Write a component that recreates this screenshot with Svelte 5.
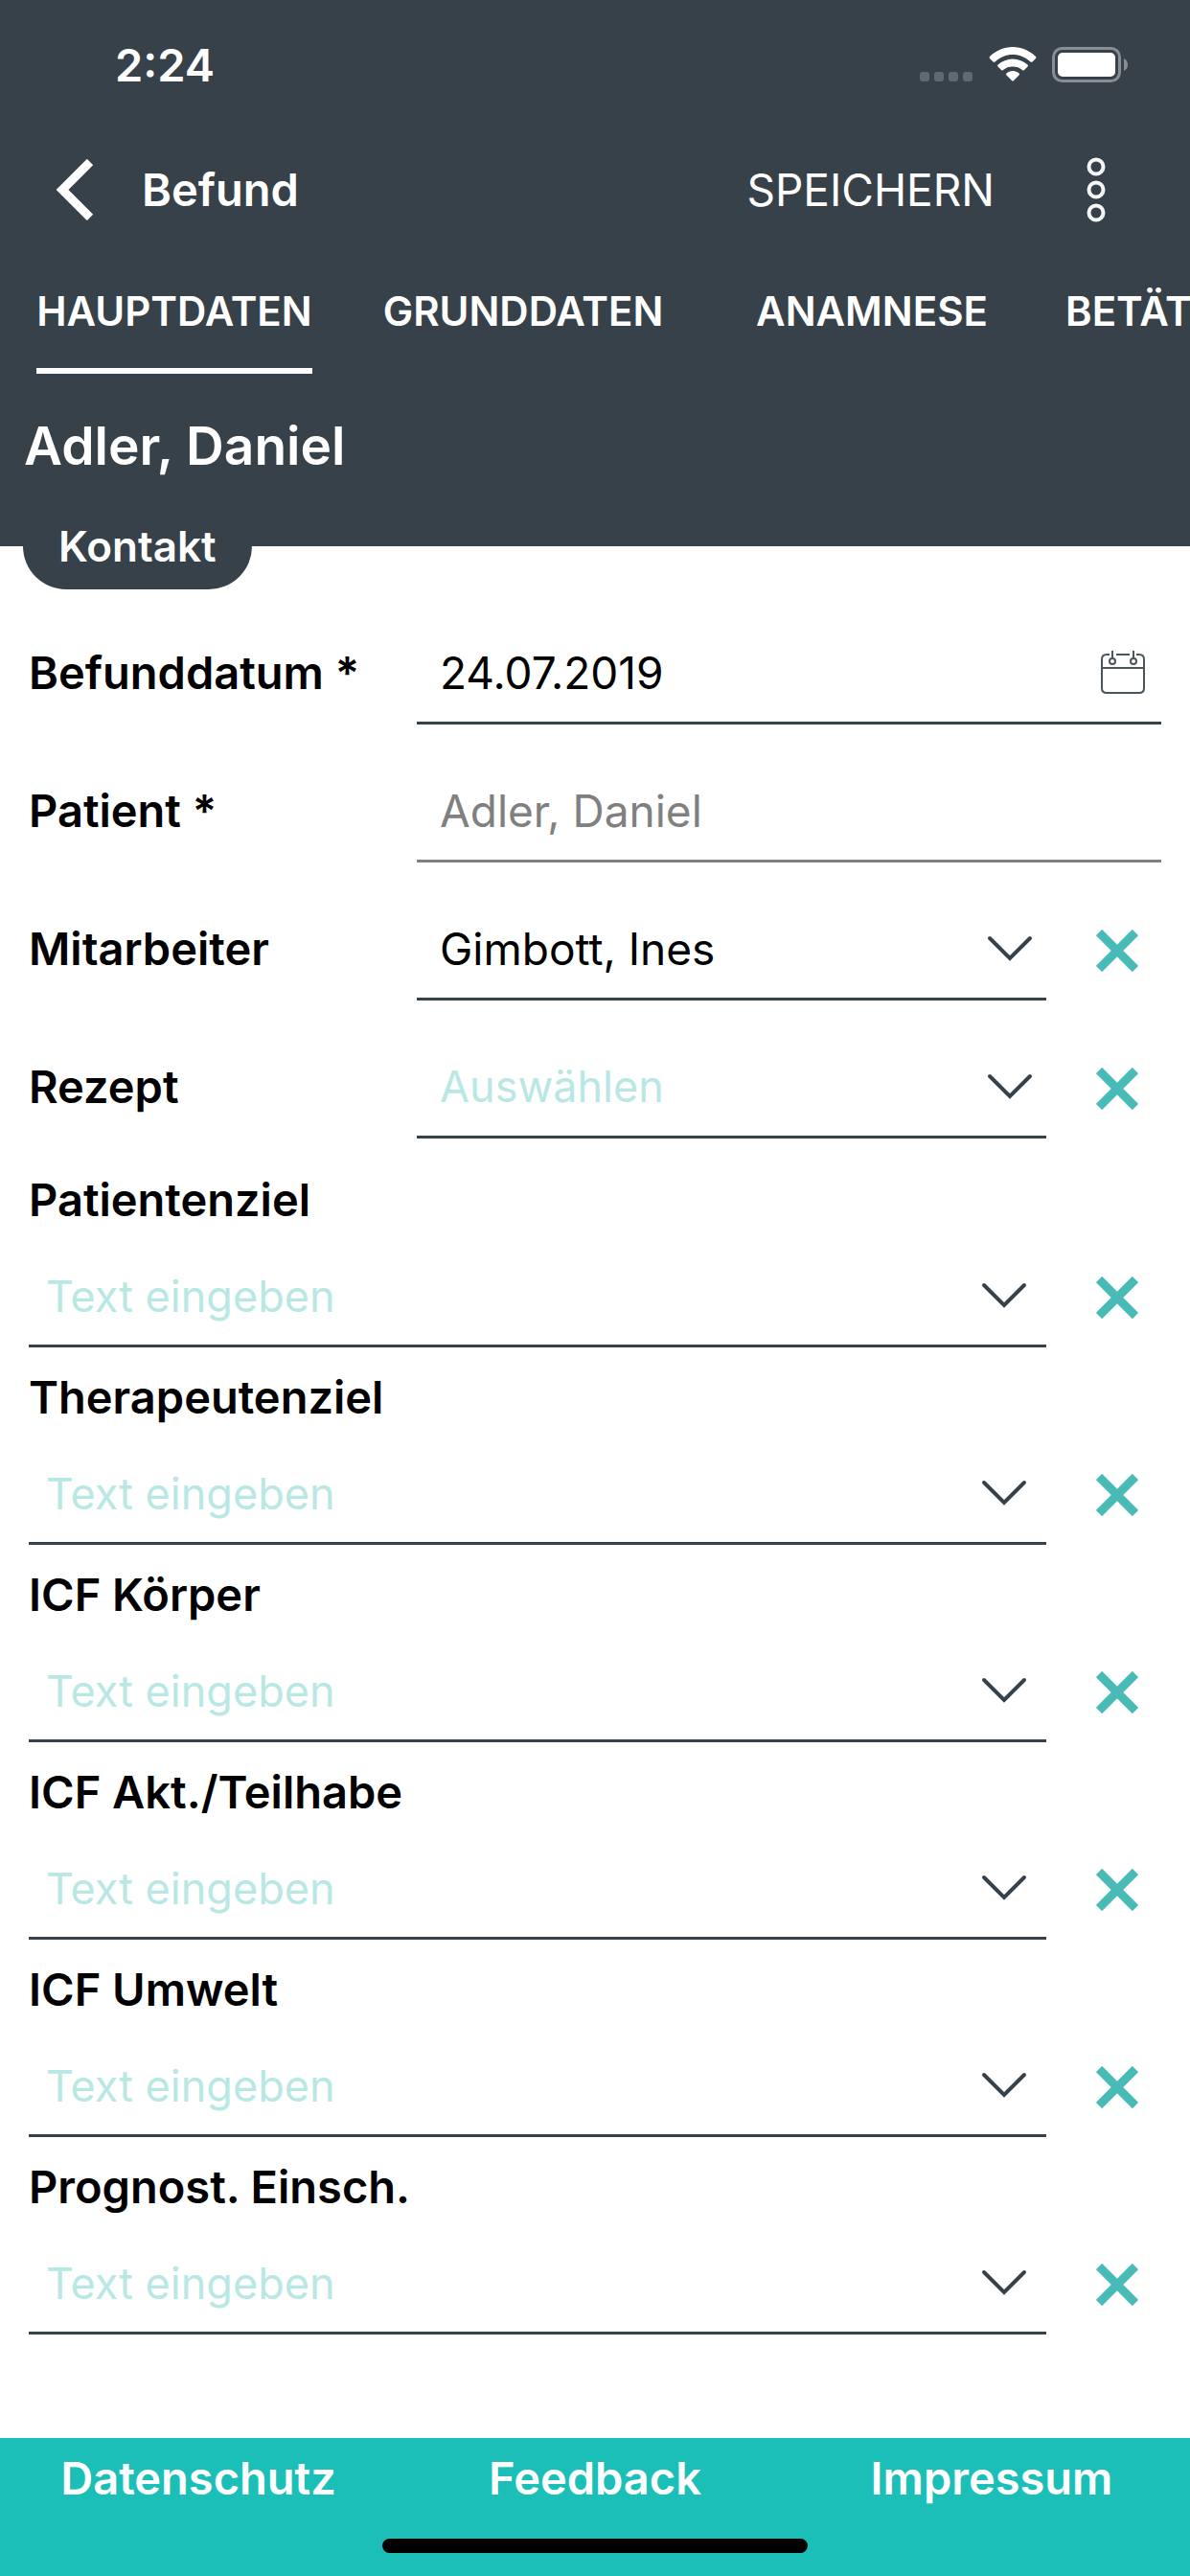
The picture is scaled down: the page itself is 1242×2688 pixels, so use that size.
<script lang="ts">
  interface TextField {
    id: string;
    label: string;
    value: string;
  }

  const tabs = ['HAUPTDATEN', 'GRUNDDATEN', 'ANAMNESE', 'BETÄTIGUNGSPROFIL'];
  let activeTab = $state('HAUPTDATEN');

  let befunddatum = $state('24.07.2019');
  let mitarbeiter = $state('Gimbott, Ines');
  let rezept = $state('');

  let textFields: TextField[] = $state([
    { id: 'patientenziel', label: 'Patientenziel', value: '' },
    { id: 'therapeutenziel', label: 'Therapeutenziel', value: '' },
    { id: 'icf-koerper', label: 'ICF Körper', value: '' },
    { id: 'icf-teilhabe', label: 'ICF Akt./Teilhabe', value: '' },
    { id: 'icf-umwelt', label: 'ICF Umwelt', value: '' },
    { id: 'prognose', label: 'Prognost. Einsch.', value: '' }
  ]);
</script>

{#snippet chevron()}
  <svg class="chevron" width="48" height="28" viewBox="0 0 48 28" aria-hidden="true">
    <path d="M3 3 L24 24 L45 3" fill="none" stroke="#37414a" stroke-width="4" stroke-linecap="round" />
  </svg>
{/snippet}

{#snippet clearButton(label: string, clear: () => void)}
  <button type="button" class="clear" aria-label="{label} löschen" onclick={clear}>
    <svg width="44" height="44" viewBox="0 0 44 44" aria-hidden="true">
      <path d="M3 3 L41 41 M41 3 L3 41" stroke="#48bbb6" stroke-width="9" />
    </svg>
  </button>
{/snippet}

<div class="app">
  <header>
    <div class="status-bar">
      <span class="time">2:24</span>
      <div class="status-icons">
        <svg width="56" height="38" viewBox="0 0 56 38" aria-hidden="true">
          <g fill="#616971">
            <rect x="0" y="26" width="10" height="10" rx="3" />
            <rect x="15" y="26" width="10" height="10" rx="3" />
            <rect x="30" y="26" width="10" height="10" rx="3" />
            <rect x="45" y="26" width="10" height="10" rx="3" />
          </g>
        </svg>
        <svg width="50" height="38" viewBox="0 0 50 38" aria-hidden="true">
          <path d="M25 0 C34 0 43 4 49 10 Q50 11 49 12 L45.500 15.500 Q44.500 16 43.500 15.500 C38 10.500 32 8 25 8 C18 8 12 10.500 6.500 15.500 Q5.500 16 4.500 15.500 L1 12 Q0 11 1 10 C7 4 16 0 25 0 Z" fill="#fff" />
          <path d="M25 12.500 C31 12.500 36 15 40.500 18.500 Q41.500 19.500 40.500 20.500 L37 24 Q36 25 35 24 C32 21.500 29 20.500 25 20.500 C21 20.500 18 21.500 15 24 Q14 25 13 24 L9.500 20.500 Q8.500 19.500 9.500 18.500 C14 15 19 12.500 25 12.500 Z" fill="#fff" />
          <path d="M25 25 C27.500 25 30 26 31.500 27.500 Q32.500 28.500 31.500 29.500 L26 35 Q25 36 24 35 L18.500 29.500 Q17.500 28.500 18.500 27.500 C20 26 22.500 25 25 25 Z" fill="#fff" />
        </svg>
        <svg width="80" height="38" viewBox="0 0 80 38" aria-hidden="true">
          <rect x="1.500" y="1.500" width="69" height="34" rx="9" fill="none" stroke="#888e93" stroke-width="3" />
          <rect x="6" y="6" width="60" height="25" rx="5" fill="#fff" />
          <path d="M75 12 Q79 14 79 18.500 Q79 23 75 25 Z" fill="#888e93" />
        </svg>
      </div>
    </div>

    <div class="toolbar">
      <button type="button" class="icon-button" aria-label="Zurück">
        <svg width="40" height="64" viewBox="0 0 40 64" aria-hidden="true">
          <path d="M36 3 L7 32 L36 61" fill="none" stroke="#fff" stroke-width="9" />
        </svg>
      </button>
      <h1>Befund</h1>
      <button type="button" class="save">SPEICHERN</button>
      <button type="button" class="icon-button" aria-label="Menü">
        <svg width="20" height="68" viewBox="0 0 20 68" aria-hidden="true">
          <g fill="none" stroke="#f4f5f5" stroke-width="4">
            <circle cx="10" cy="10" r="7.500" />
            <circle cx="10" cy="34" r="7.500" />
            <circle cx="10" cy="58" r="7.500" />
          </g>
        </svg>
      </button>
    </div>

    <nav class="tabs">
      {#each tabs as tab}
        <button type="button" class="tab" onclick={() => (activeTab = tab)}>
          <span class:active={activeTab === tab}>{tab}</span>
        </button>
      {/each}
    </nav>

    <h2>Adler, Daniel</h2>
    <button type="button" class="contact">Kontakt</button>
  </header>

  <main>
    <div class="row">
      <label for="befunddatum">Befunddatum *</label>
      <div class="field wide">
        <input id="befunddatum" type="text" bind:value={befunddatum} />
        <button type="button" class="field-button" aria-label="Kalender öffnen">
          <svg width="46" height="46" viewBox="0 0 46 46" aria-hidden="true">
            <g fill="none" stroke="#4b555d" stroke-width="2">
              <path d="M9 4 H6 Q1 4 1 9 V39 Q1 44 6 44 H40 Q45 44 45 39 V9 Q45 4 40 4 H37 M16 4 H30 M1 18 H45" />
              <path d="M12 0 V8 M34 0 V8" />
              <circle cx="12" cy="11" r="3" />
              <circle cx="34" cy="11" r="3" />
            </g>
          </svg>
        </button>
      </div>
    </div>

    <div class="row">
      <label for="patient">Patient *</label>
      <div class="field wide disabled">
        <input id="patient" type="text" value="Adler, Daniel" disabled />
      </div>
    </div>

    <div class="row">
      <label for="mitarbeiter">Mitarbeiter</label>
      <div class="field select">
        <select id="mitarbeiter" bind:value={mitarbeiter}>
          <option value=""></option>
          <option>Gimbott, Ines</option>
        </select>
        {@render chevron()}
      </div>
      {@render clearButton('Mitarbeiter', () => (mitarbeiter = ''))}
    </div>

    <div class="row">
      <label for="rezept">Rezept</label>
      <div class="field select">
        <select id="rezept" class:empty={!rezept} bind:value={rezept}>
          <option value="">Auswählen</option>
        </select>
        {@render chevron()}
      </div>
      {@render clearButton('Rezept', () => (rezept = ''))}
    </div>

    <div class="text-fields">
      {#each textFields as field (field.id)}
        <div class="text-row">
          <label for={field.id}>{field.label}</label>
          <div class="field">
            <input id={field.id} type="text" placeholder="Text eingeben" bind:value={field.value} />
            <button type="button" class="field-button" aria-label="{field.label} auswählen">
              {@render chevron()}
            </button>
          </div>
          {@render clearButton(field.label, () => (field.value = ''))}
        </div>
      {/each}
    </div>
  </main>

  <footer>
    <nav>
      <a href="#datenschutz">Datenschutz</a>
      <a href="#feedback">Feedback</a>
      <a href="#impressum">Impressum</a>
    </nav>
    <div class="home-indicator"></div>
  </footer>
</div>

<style>
  :global(body) {
    background-color: #fff;
  }

  .app {
    display: flex;
    flex-direction: column;
    min-height: 100vh;
    overflow: hidden;
    font-family: Inter, 'Liberation Sans', sans-serif;
    font-size: 47px;
    line-height: 60px;
    color: #000;
  }

  button,
  input,
  select {
    font: inherit;
    color: inherit;
    background: none;
    border: none;
    border-radius: 0;
    margin: 0;
    padding: 0;
    outline: none;
  }

  button,
  select {
    cursor: pointer;
  }

  svg {
    display: block;
  }

  header {
    display: flex;
    flex-direction: column;
    align-items: flex-start;
    background-color: #37414a;
    color: #fff;
  }

  .status-bar,
  .toolbar,
  .tabs {
    display: flex;
    align-items: center;
    width: 100%;
    box-sizing: border-box;
  }

  .status-bar {
    justify-content: space-between;
    height: 136px;
    padding: 0 64px 0 120px;
  }

  .time {
    font-weight: 600;
  }

  .status-icons {
    display: flex;
    gap: 16px;
  }

  .toolbar {
    height: 124px;
    padding: 0 48px 0 28px;
  }

  .icon-button {
    display: flex;
    justify-content: center;
    width: 100px;
  }

  h1 {
    flex: 1;
    margin: 0;
    padding-left: 20px;
    font-size: 47px;
    font-weight: 600;
  }

  .save {
    padding: 0 56px;
    font-size: 46px;
  }

  .tabs {
    overflow: hidden;
  }

  .tab {
    flex: none;
    min-width: 364px;
    padding: 35px 20px 0;
    font-size: 42px;
    font-weight: 600;
    white-space: nowrap;
  }

  .tab span {
    display: inline-block;
    padding-bottom: 29px;
    border-bottom: 6px solid transparent;
  }

  .tab span.active {
    border-color: #fff;
  }

  h2 {
    margin: 0;
    padding: 39px 25px 24px;
    font-size: 55px;
    line-height: 72px;
    font-weight: 600;
  }

  .contact {
    position: relative;
    height: 90px;
    margin: 0 24px -45px;
    padding: 0 37px;
    border-radius: 50px;
    background-color: #37414a;
    font-size: 44px;
    font-weight: 600;
  }

  main {
    flex: 1;
    padding: 42px 30px;
  }

  label {
    font-weight: 600;
  }

  .row {
    display: grid;
    grid-template-columns: 405px minmax(0, 1fr) 120px;
    align-items: end;
    height: 144px;
  }

  .row label {
    padding-bottom: 24px;
  }

  .field {
    display: flex;
    align-items: center;
    border-bottom: 3px solid #37414a;
    font-size: 46px;
  }

  .field.wide {
    grid-column: 2 / -1;
  }

  .field input,
  .field select {
    flex: 1;
    min-width: 0;
    height: 102px;
    padding-left: 24px;
  }

  .field select {
    appearance: none;
  }

  .field.disabled {
    border-color: #808080;
    color: #808080;
  }

  .field.select {
    display: grid;
    align-items: center;
  }

  .field.select > :global(*) {
    grid-area: 1 / 1;
  }

  .field.select .chevron {
    justify-self: end;
    margin-right: 14px;
    pointer-events: none;
  }

  .field-button {
    padding: 0 17px;
  }

  .field select.empty,
  .field input::placeholder {
    color: #b9e8e4;
    font-size: 45px;
    opacity: 1;
  }

  .clear {
    display: flex;
    width: 120px;
    padding: 0 0 30px 52px;
    box-sizing: border-box;
  }

  .text-fields {
    padding-top: 12px;
  }

  .text-row {
    display: grid;
    grid-template-columns: minmax(0, 1fr) 120px;
    align-items: end;
    height: 206px;
  }

  .text-row label {
    grid-column: 1 / -1;
    align-self: start;
    padding-top: 22px;
  }

  .text-row .field input {
    padding-left: 18px;
  }

  .text-row .field-button {
    padding: 0 20px;
  }

  footer {
    display: flex;
    flex-direction: column;
    height: 144px;
    background-color: #1bbfb8;
  }

  footer nav {
    display: grid;
    grid-template-columns: repeat(3, 1fr);
    padding-top: 12px;
    text-align: center;
  }

  footer a {
    color: #fff;
    font-weight: 600;
    text-decoration: none;
  }

  .home-indicator {
    align-self: center;
    width: 444px;
    height: 15px;
    margin-top: 33px;
    border-radius: 8px;
    background-color: #000;
  }
</style>
